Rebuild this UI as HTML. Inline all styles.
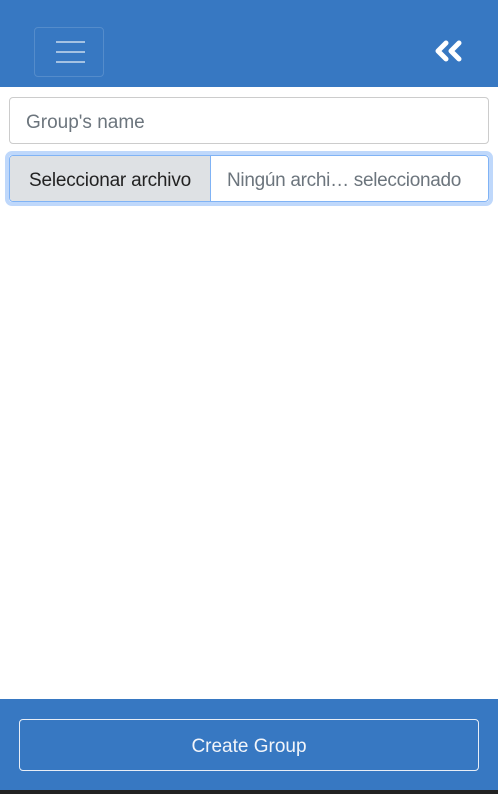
<!DOCTYPE html>
<html><head><style>
body{margin:0;width:498px;height:794px;position:relative;background:#fff;font-family:"Liberation Sans",sans-serif;overflow:hidden}
.hdr{position:absolute;left:0;top:0;width:498px;height:87px;background:#3778c2}
.ham{position:absolute;left:34px;top:27px;width:68px;height:48px;border:1px solid rgba(255,255,255,.15);border-radius:4px}
.ham i{position:absolute;left:21px;width:29px;height:2px;background:rgba(255,255,255,.55)}
.inp{position:absolute;left:9px;top:97px;width:478px;height:45px;border:1px solid #ccc;border-radius:4px;font-size:19px;color:#6c757d;line-height:49px;text-indent:16px}
.ring{position:absolute;left:5px;top:151px;width:480px;height:47px;border:4px solid #bfd8fb;border-radius:7px}
.file{position:absolute;left:9px;top:155px;width:478px;height:45px;border:1px solid #80b3f5;border-radius:4px;overflow:hidden;font-size:19px;line-height:49px}
.file .b{position:absolute;left:0;top:0;width:200px;height:45px;background:#dee1e4;border-right:1px solid #80b3f5;color:#222;text-align:center;letter-spacing:-0.2px}
.file .t{position:absolute;left:217px;top:0;color:#6c757d;white-space:nowrap;letter-spacing:-0.3px}
.ftr{position:absolute;left:0;top:699px;width:498px;height:91px;background:#3778c2}
.btn{position:absolute;left:19px;top:20px;width:458px;height:50px;border:1px solid #e8eef7;border-radius:4px;color:#f2f5fa;font-size:19px;text-align:center;line-height:54px}
.bot{position:absolute;left:0;top:790px;width:498px;height:4px;background:#222}
</style></head><body>
<div class="hdr">
<div class="ham"><i style="top:13px"></i><i style="top:23px"></i><i style="top:33px"></i></div>
<svg style="position:absolute;left:434px;top:40px" width="30" height="22" viewBox="0 0 30 22"><path d="M12 3 L4 11 L12 19 M25 3 L17 11 L25 19" fill="none" stroke="#fff" stroke-width="5" stroke-linecap="round" stroke-linejoin="round"/></svg>
</div>
<div class="inp">Group's name</div>
<div class="ring"></div>
<div class="file"><div class="b">Seleccionar archivo</div><div class="t">Ningún archi… seleccionado</div></div>
<div class="ftr"><div class="btn">Create Group</div></div>
<div class="bot"></div>
</body></html>
